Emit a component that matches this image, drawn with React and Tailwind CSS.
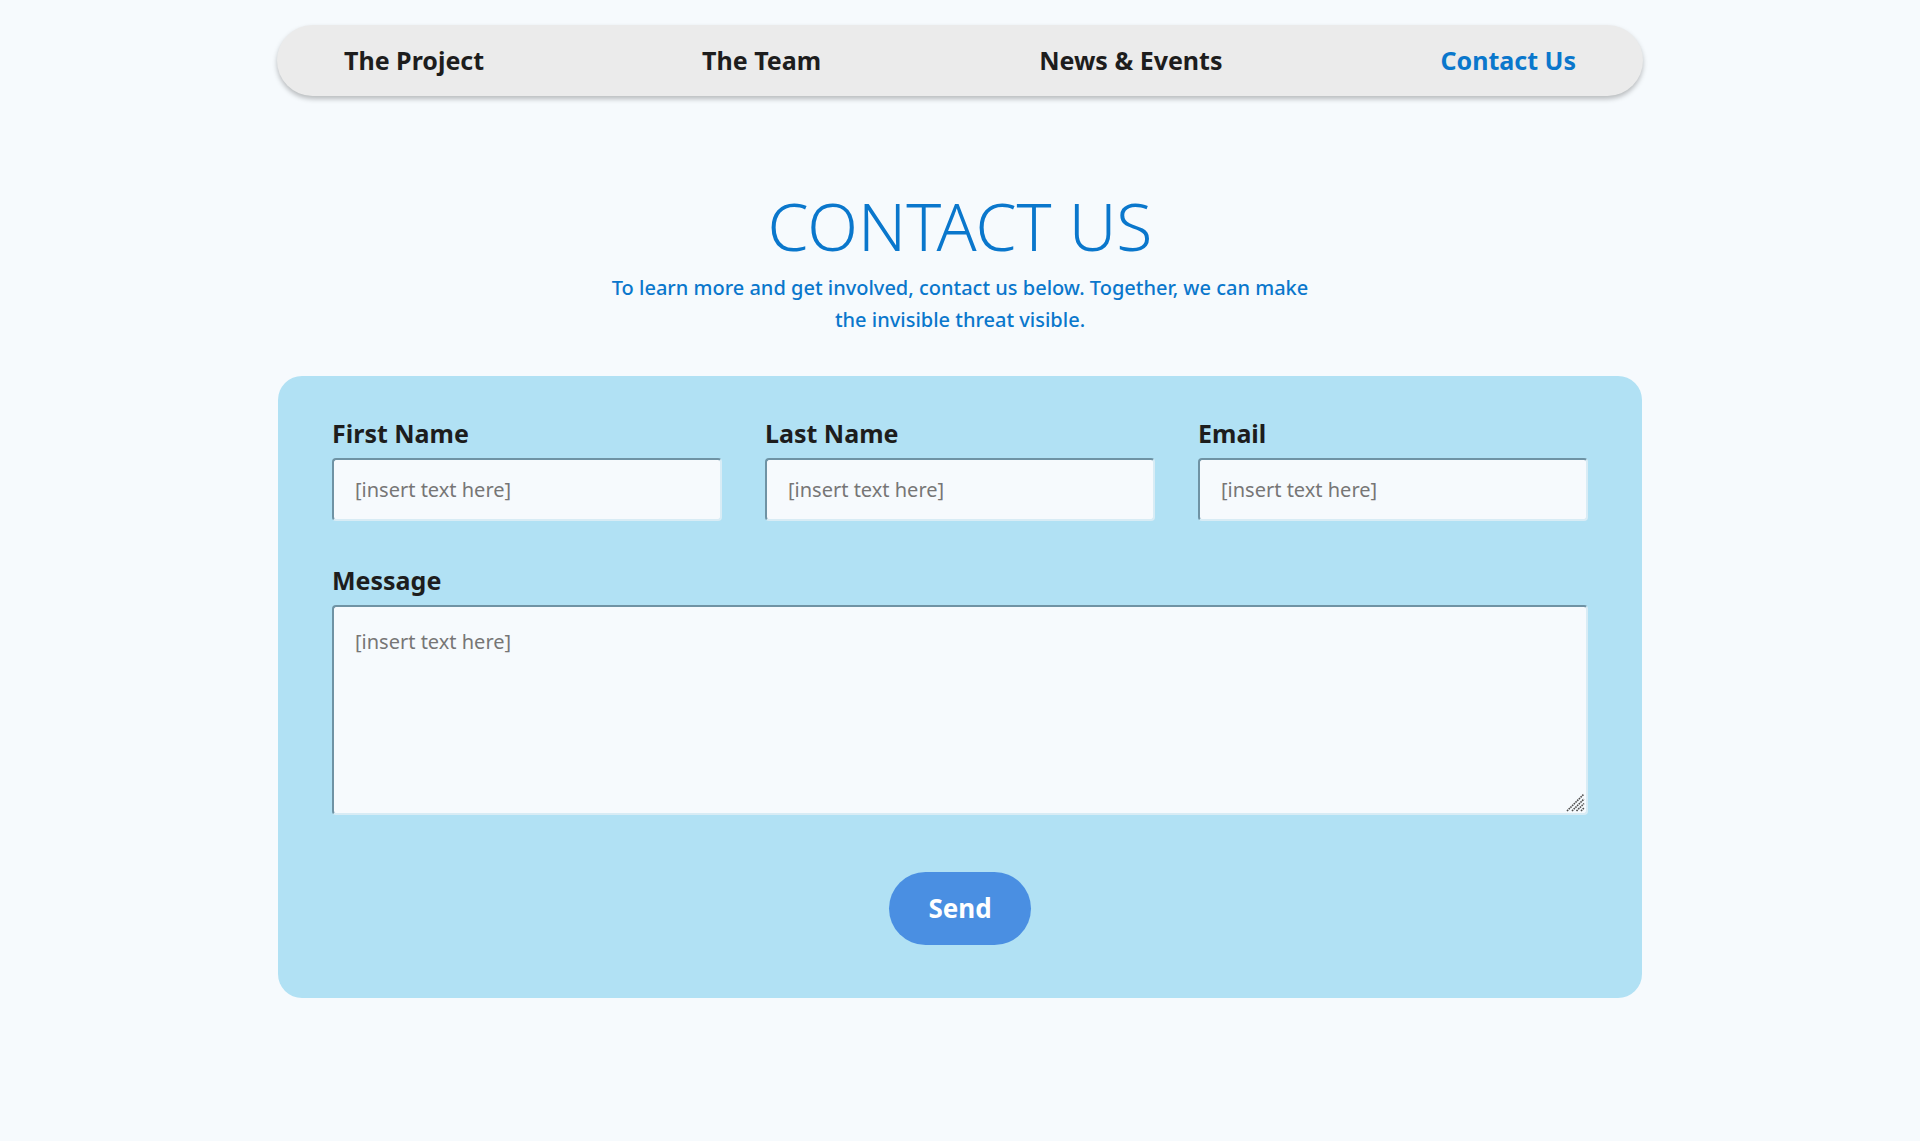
import { useState } from 'react';

const navItems = ['The Project', 'The Team', 'News & Events', 'Contact Us'];

function Field({ label, id }) {
  return (
    <div className="flex flex-col">
      <label htmlFor={id} className="mb-[10px] text-[25px] font-bold leading-[30px] text-[#1d1d1d]">
        {label}
      </label>
      <input
        id={id}
        type="text"
        placeholder="[insert text here]"
        className="h-[63px] rounded-[4px] border-2 border-t-[#6f93a4] border-l-[#6f93a4] border-r-[#d8ecf5] border-b-[#d8ecf5] bg-[#f6fafd] px-[21px] text-[20px] text-[#1d1d1d] placeholder:text-[#767676] focus:outline-none"
      />
    </div>
  );
}

export default function App() {
  const [active] = useState('Contact Us');

  return (
    <div className="min-h-[1141px] bg-[#f6fafd] pt-[25px] font-['Noto_Sans',sans-serif]">
      <nav className="mx-auto flex h-[71px] w-[1366px] items-center justify-between rounded-full bg-[#ebebeb] px-[67px] shadow-[0_3px_5px_rgba(0,0,0,0.25)]">
        {navItems.map((item) => (
          <a
            key={item}
            href="#"
            className={`text-[25px] font-bold ${item === active ? 'text-[#0a77cc]' : 'text-[#1d1d1d]'}`}
          >
            {item}
          </a>
        ))}
      </nav>

      <header className="mt-[89px] flex flex-col items-center text-center text-[#0a77cc]">
        <h1 className="text-[66px] font-light leading-[80px]">CONTACT US</h1>
        <p className="mt-[7px] w-[720px] text-[20px] font-medium leading-[32px]">
          To learn more and get involved, contact us below. Together, we can make the invisible threat visible.
        </p>
      </header>

      <form
        className="mx-auto mt-[40px] w-[1364px] rounded-[24px] bg-[#b1e1f4] px-[54px] pt-[42px] pb-[53px]"
        onSubmit={(event) => event.preventDefault()}
      >
        <div className="grid grid-cols-3 gap-x-[43px]">
          <Field label="First Name" id="first-name" />
          <Field label="Last Name" id="last-name" />
          <Field label="Email" id="email" />
        </div>

        <div className="mt-[44px] flex flex-col">
          <label htmlFor="message" className="mb-[10px] text-[25px] font-bold leading-[30px] text-[#1d1d1d]">
            Message
          </label>
          <div className="relative">
            <textarea
              id="message"
              placeholder="[insert text here]"
              className="block h-[210px] w-full resize-none rounded-[4px] border-2 border-t-[#6f93a4] border-l-[#6f93a4] border-r-[#d8ecf5] border-b-[#d8ecf5] bg-[#f6fafd] px-[21px] pt-[20px] text-[20px] text-[#1d1d1d] placeholder:text-[#767676] focus:outline-none"
            />
            <svg
              className="pointer-events-none absolute right-[3px] bottom-[3px]"
              width="19"
              height="19"
              viewBox="0 0 19 19"
              fill="none"
              stroke="#4d4d4d"
              strokeWidth="1.6"
              strokeDasharray="1.6 0.8"
            >
              <path d="M1 18 L18 1" />
              <path d="M6 18 L18 6" />
              <path d="M10.5 18 L18 10.5" />
              <path d="M15 18 L18 15" />
            </svg>
          </div>
        </div>

        <div className="mt-[57px] flex justify-center">
          <button
            type="submit"
            className="h-[73px] w-[142px] rounded-full bg-[#4a8fe2] text-[26px] font-bold text-white"
          >
            Send
          </button>
        </div>
      </form>
    </div>
  );
}
